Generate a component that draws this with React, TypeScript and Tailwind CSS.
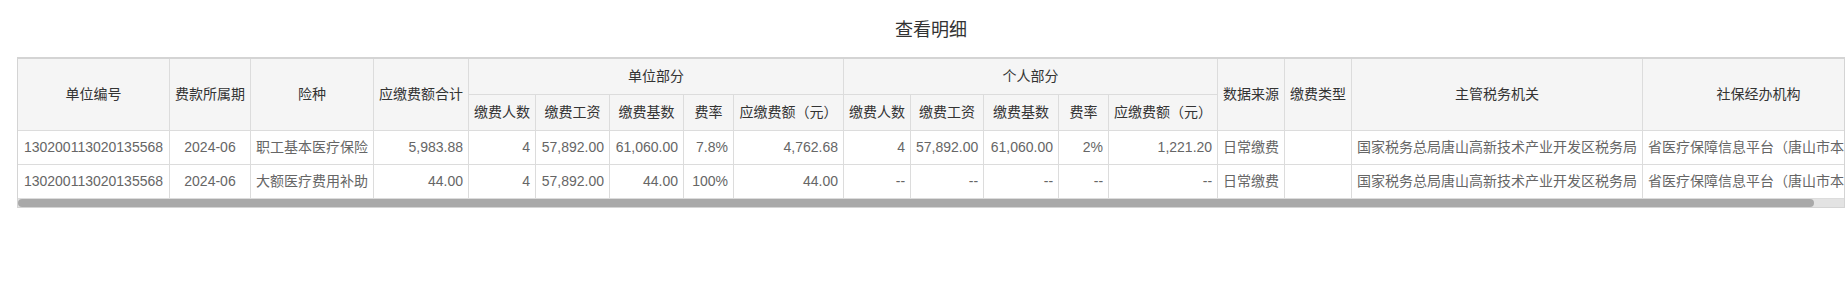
import React from 'react';

type Row = {
    unitNo: string;
    period: string;
    insurance: string;
    total: string;
    unit: string[];
    personal: string[];
    source: string;
    payType: string;
    taxOffice: string;
    agency: string;
};

// column widths, left to right
const colWidths = [152, 81, 123, 95, 67, 74, 74, 50, 110, 67, 73, 75, 50, 109, 67, 67, 291, 232];
const tableWidth = colWidths.reduce((a, b) => a + b, 0);
const viewWidth = 1826;

const partCols = ['缴费人数', '缴费工资', '缴费基数', '费率', '应缴费额（元）'];

const rows: Row[] = [
    {
        unitNo: '130200113020135568',
        period: '2024-06',
        insurance: '职工基本医疗保险',
        total: '5,983.88',
        unit: ['4', '57,892.00', '61,060.00', '7.8%', '4,762.68'],
        personal: ['4', '57,892.00', '61,060.00', '2%', '1,221.20'],
        source: '日常缴费',
        payType: '',
        taxOffice: '国家税务总局唐山高新技术产业开发区税务局',
        agency: '省医疗保障信息平台（唐山市本级）'
    },
    {
        unitNo: '130200113020135568',
        period: '2024-06',
        insurance: '大额医疗费用补助',
        total: '44.00',
        unit: ['4', '57,892.00', '44.00', '100%', '44.00'],
        personal: ['--', '--', '--', '--', '--'],
        source: '日常缴费',
        payType: '',
        taxOffice: '国家税务总局唐山高新技术产业开发区税务局',
        agency: '省医疗保障信息平台（唐山市本级）'
    }
];

const th = 'h-[36px] px-[5px] border-r border-b border-[#dcdcdc] bg-[#f5f5f5] font-normal text-[#333] text-center align-middle whitespace-nowrap';
const td = 'h-[34px] px-[5px] border-r border-b border-[#dcdcdc] text-[#666] align-middle whitespace-nowrap overflow-hidden';

function App() {
    const thumbWidth = Math.round((viewWidth * viewWidth) / tableWidth);

    return (
        <div className="w-full h-[296px] bg-white overflow-hidden pl-[17px] font-['Liberation_Sans','Noto_Sans_CJK_SC',sans-serif] text-[14px]">
            <div className="w-[1828px]">
                <h2 className="h-[57px] pt-[18px] text-center text-[18px] leading-[24px] text-[#333] font-normal">查看明细</h2>

                <div className="border border-t-2 border-[#d4d4d4]">
                    <div className="overflow-hidden">
                        <table
                            className="table-fixed border-separate border-spacing-0"
                            style={{ width: tableWidth }}
                        >
                            <colgroup>
                                {colWidths.map((w, i) => (
                                    <col key={i} style={{ width: w }} />
                                ))}
                            </colgroup>
                            <thead>
                                <tr>
                                    <th rowSpan={2} className={th}>单位编号</th>
                                    <th rowSpan={2} className={th}>费款所属期</th>
                                    <th rowSpan={2} className={th}>险种</th>
                                    <th rowSpan={2} className={th}>应缴费额合计</th>
                                    <th colSpan={5} className={th}>单位部分</th>
                                    <th colSpan={5} className={th}>个人部分</th>
                                    <th rowSpan={2} className={th}>数据来源</th>
                                    <th rowSpan={2} className={th}>缴费类型</th>
                                    <th rowSpan={2} className={th}>主管税务机关</th>
                                    <th rowSpan={2} className={th}>社保经办机构</th>
                                </tr>
                                <tr>
                                    {partCols.map(c => (
                                        <th key={'u' + c} className={th}>{c}</th>
                                    ))}
                                    {partCols.map(c => (
                                        <th key={'p' + c} className={th}>{c}</th>
                                    ))}
                                </tr>
                            </thead>
                            <tbody>
                                {rows.map((r, i) => (
                                    <tr key={i}>
                                        <td className={`${td} text-center`}>{r.unitNo}</td>
                                        <td className={`${td} text-center`}>{r.period}</td>
                                        <td className={`${td} text-center`}>{r.insurance}</td>
                                        <td className={`${td} text-right`}>{r.total}</td>
                                        {r.unit.map((v, j) => (
                                            <td key={'u' + j} className={`${td} text-right`}>{v}</td>
                                        ))}
                                        {r.personal.map((v, j) => (
                                            <td key={'p' + j} className={`${td} text-right`}>{v}</td>
                                        ))}
                                        <td className={`${td} text-center`}>{r.source}</td>
                                        <td className={`${td} text-center`}>{r.payType}</td>
                                        <td className={`${td} text-center`}>{r.taxOffice}</td>
                                        <td className={`${td} text-center`}>{r.agency}</td>
                                    </tr>
                                ))}
                            </tbody>
                        </table>
                    </div>

                    {/* horizontal scroll bar */}
                    <div className="h-[8px] bg-[#e3e3e3]">
                        <div
                            className="h-full rounded-full bg-[#a9a9a9]"
                            style={{ width: thumbWidth }}
                        />
                    </div>
                </div>
            </div>
        </div>
    );
}

export default App;
